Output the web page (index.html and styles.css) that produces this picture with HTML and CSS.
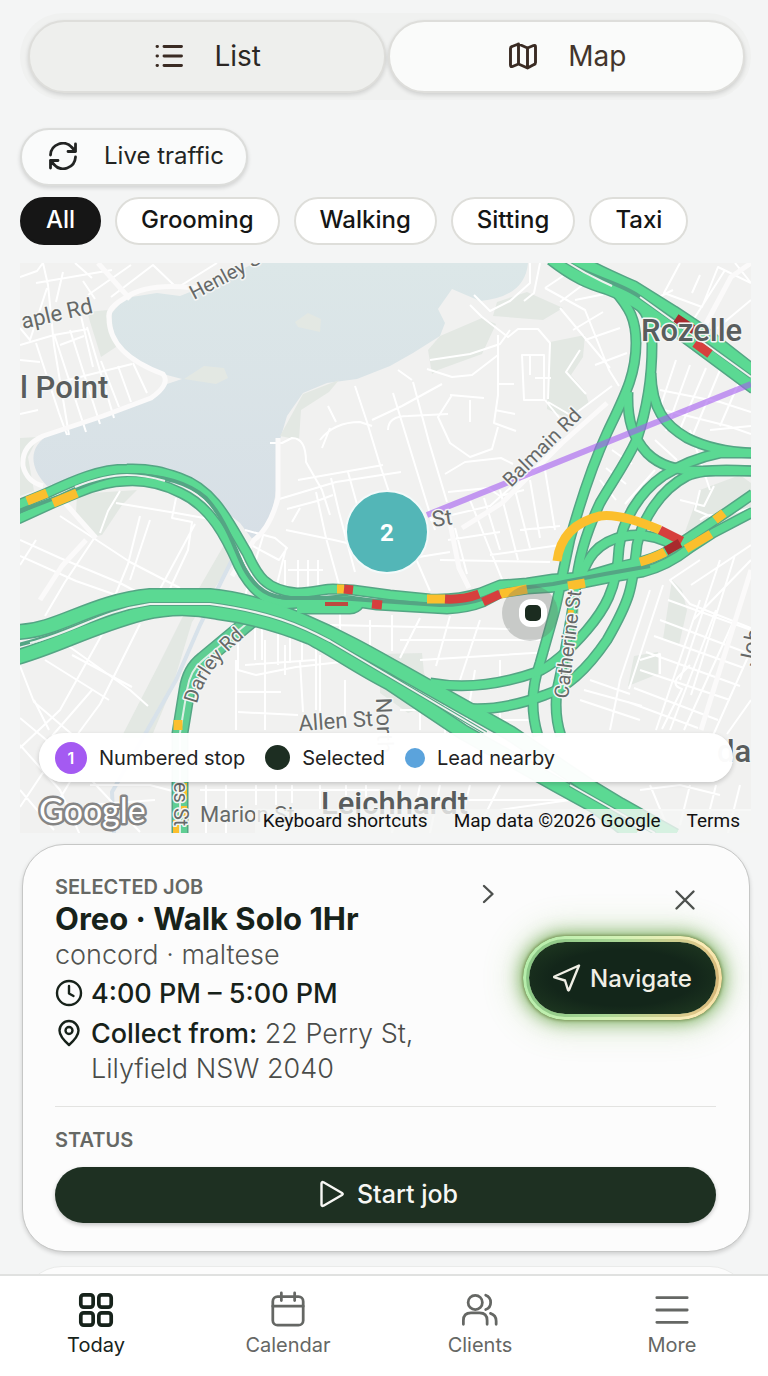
FILE: index.html
```html
<!DOCTYPE html>
<html lang="en">
<head>
<meta charset="utf-8">
<meta name="viewport" content="width=device-width, initial-scale=1">
<title>Today</title>
<link rel="stylesheet" href="styles.css">
</head>
<body>
<div class="app">
  <main class="main">
    <div class="segmented">
      <button class="segment" type="button">
        <svg class="icon" viewBox="0 0 28 28"><path d="M9 4.500h17.500M9 14h17.500M9 23.500h17.500" /><path d="M2 4.500h.5M2 14h.5M2 23.500h.5"/></svg>
        List
      </button>
      <button class="segment segment-active" type="button" aria-pressed="true">
        <svg class="icon" viewBox="0 0 28 28"><path d="M1.500 6.500Q1.500 5 3 4.500L9.500 2l9 4 6-2.500q2-.7 2 1.500v15.500q0 1.500-1.500 2L18.500 26l-9-4-6 2.500q-2 .7-2-1.500zM9.500 2v20M18.500 6v20"/></svg>
        Map
      </button>
    </div>

    <button class="traffic" type="button">
      <svg class="icon" viewBox="0 0 28 28"><path d="M1.500 13A12.300 12.300 0 0 1 23 5.500l3.500 4M26.500 2v7.500H19M26.500 15A12.300 12.300 0 0 1 5 22.500l-3.500-4M1.500 26v-7.500H9"/></svg>
      Live traffic
    </button>

    <div class="chips">
      <button class="chip chip-active" type="button" aria-pressed="true">All</button>
      <button class="chip" type="button">Grooming</button>
      <button class="chip" type="button">Walking</button>
      <button class="chip" type="button">Sitting</button>
      <button class="chip" type="button">Taxi</button>
    </div>

    <section class="map" aria-label="Map">
      <svg class="map-canvas" viewBox="20 263 731 570" preserveAspectRatio="xMidYMid slice">
        <defs>
          <linearGradient id="water" x1="0" y1="0" x2="0" y2="1"><stop offset="0" stop-color="#dce7e8"/><stop offset="1" stop-color="#d7dfe6"/></linearGradient>
          <g id="roads">
            <path d="M552 258C575 276 590 282 607 287C630 295 645 307 663 319L693 341L755 387"/>
            <path d="M572 258C595 272 615 280 633 288L673 313L700 331L755 374"/>
            <path d="M18 632C60 630 90 602 150 596H210C235 598 270 608 300 620C340 637 370 654 400 671L510 733L587 785L620 805L675 836"/>
            <path d="M18 657C60 645 90 627 143 613Q180 604 217 612C250 616 280 625 310 637C335 650 360 668 390 683L463 732L557 785L597 807L634 836"/>
          </g>
          <g id="ramps">
            <path d="M18 505L47 493C75 480 100 469 127 469C150 468 165 473 180 478C215 490 230 525 247 553C257 575 265 590 297 593C315 592 325 589 333 589L353 590L390 595L430 599Q458 600 480 593L500 585L527 583L553 579L583 577L617 567L640 562Q665 555 682 542L700 530L727 512L753 494"/>
            <path d="M18 519L53 503L77 493C91 487 108 481 127 481C145 480 165 485 181 493C211 507 226 537 239 566C249 586 264 602 286 604L343 600L377 605L447 609Q468 608 483 602L500 593L527 589L557 587L583 583L613 577L643 572Q667 566 690 548L713 533L753 512"/>
            <path d="M297 609H350Q356 609 360 603"/>
            <path d="M614 290C630 308 636 320 636 343C636 375 625 395 607 433C590 470 580 503 570 539C560 585 558 600 553 617L540 663Q527 700 538 736"/>
            <path d="M626 291C650 312 652 325 652 345C652 380 645 415 637 439C625 465 610 485 600 503C585 535 578 560 575 593C570 625 565 655 557 690Q554 715 561 736"/>
            <path d="M628 392C627 420 633 438 647 453Q665 471 700 471H753"/>
            <path d="M651 373C652 410 665 425 687 438Q715 452 753 453"/>
            <path d="M753 453H720C700 457 680 465 663 476C640 492 622 520 619 548C617 590 604 610 587 630C570 650 550 667 537 672Q480 692 430 683"/>
            <path d="M753 471C720 469 700 470 687 476C660 490 642 520 637 545C632 590 630 600 607 640C590 665 570 687 545 695Q500 712 463 708"/>
            <path d="M580 579C587 560 595 542 625 536Q650 532 675 546"/>
          </g>
          <path id="darley" d="M256 616L227 640L203 660Q190 670 187 690L180 733V836"/>
          <path id="darley-text" d="M197 704Q204 670 250 632"/>
          <path id="catherine" d="M576 586C575 620 569 660 559 694"/>
        </defs>

        <rect class="land" x="20" y="263" width="731" height="570"/>
        <path fill="url(#water)" d="M255 263L215 282L180 296L157 293L125 298L112 313C111 335 118 350 143 366L163 374L182 379L167 384L157 394L127 408L87 423L50 434C30 445 27 465 47 486L127 473L197 489L240 523L253 540L265 528C275 510 279 480 279 443L287 416L303 393L327 383L357 379L390 366L413 353L440 336L445 323L438 309L452 289L480 301Q525 297 528 263Z"/>
        <g class="park">
          <path d="M87 312l21-2 8 37-15 10zM184 379l20-13 20 2 4 10-12 6zM295 322l13-9 13 6-1 13-22-5z"/>
          <path d="M280 436l23-42 36-14-10 12-28 18-2 30zM428 350l12-14 42-18 14 6-14 30-44 16-6 4zM497 302l30-10 36 16-20 12-50-4zM550 342l35-7-2 22-12 18 14 16 4 13-20 15-22-10z"/>
          <path d="M77 494l60-4-15 15-20 30-10 2-16-24zM20 438l18-1-10 20 6 34-14 5zM700 490l40-15 11 8v28l-40 15-26 6zM672 580l10 10 5 20-8 35-16-6zM634 656l24-4v22l-30 12zM380 654l42-1 2 20 14 30-30 10-28-20z"/>
          <path d="M228 538l14 9-50 75-20 66-21 50h-30l36-70 26-52z"/>
        </g>
        <path class="creek" d="M238 548L222 580 200 625 176 680 152 722 112 792 114 833"/>

        <g class="street">
          <path d="M20 277l17-6 6-8M43 263l5 22 6 60 15 90M36 283l76-13M47 288L30 340 20 328M63 272l-7 30M75 263l17 15M88 295l43-30M111 297l42-32 24 23 40-25M20 345l34-10 34-6M36 343l23 70 8 22M54 334l32 98M70 330l30 94M87 327l27 91M101 361l18 46M118 366l13 36M133 363l14 30M60 382l72-18M20 414l18-4M20 360l20 2M80 312l13 55M83 281l12 18M60 345l24-9"/>
          <path d="M20 540l40 18 60 25 34 18M20 556l56 25 40 14M36 540l-16 25M60 516l70 46 50 26M95 537l-30 45-20 34M116 503l60 10 45 8M120 491l-12 20-8 22M140 516l-12 48-18 44M150 520l-20 60M176 498l-4 20 20 4-4 28-28 60M195 524l-35 65M110 620l-50 90-40 38M140 624l-40 80-34 46M60 640l70 50 18 16M45 660l64 40M20 666l14 36 40 34M34 700l15 30M72 655l60 32M92 690l-40 46M20 718l60 50 60 64M20 745l40 45 20 45M48 765l-28 42M80 765l-24 40M90 785h60l30 8M85 805l70-5M20 790l34 40"/>
          <path d="M245 530l30 8 12 10-8 12-26-14M263 536l-18 60M286 548l-10 40M286 530l48 10 26 6M276 500l60-18 65-10M298 480l85-15M287 509l30-8 16-6M292 522l8-14M316 492l10 46 14 50M331 478l8 34 16 60M348 472l10 36M270 443h12l10-5q14 0 14 24l16 28 8 25M320 440q14-18 40-18l12 4M330 428l-8 20M328 406l8 16M355 386l12 36 14 46 10 30M393 393l22 72 20 65M372 420l30-14 40-22M398 370l14 10M388 430q0-14 20-14l40-2"/>
          <path d="M530 263v20l-20 18-20 10-16-16M540 263l-6 30-10 8M545 288l30-20M545 288l40 22 24 60 10 16M560 302l40-30M560 308l50 60M575 300l30-6M573 330l30-18M585 340l35-12M595 365l32-12M470 305l12 12 26 20 10-8h20l12 14-2 56M430 360l40-6 30-10 10-14M498 335v60l-4 28 22 8M498 355l-26 20-20 2-25-8M452 395l-14 22 12 26 20 14 22-8 6-22M450 395l34 3M470 400v22M498 384h16M495 410l20 4M522 355h22v45h-20zM530 355v20M535 378h16M548 402l24 14 40-30M580 350l-14 22 20 22M413 382l16 60 18 60M445 474l20-12 36-4 12 6M448 492l40-4 12 8 24-6M430 520l60-14 40-36M545 400l16 20M448 540l52-8M470 500l20 50 14 34M484 498l16 52M500 490l18 70M514 486l16 62M530 480l10 58M545 470l10 60M440 560l110 2M455 528l12 46M410 545l20 46M400 560l50-8M520 530l40-4M490 555l70-10"/>
          <path d="M680 263l-16 30 38 14 16-40 33 16M700 275l-8 18M725 270l-42 66M751 300l-60 50M735 263l16 20M673 290l-20 10M676 360l-20 60M690 365l-24 66M706 368l-28 66M720 370l-30 72M660 390l60 12 31 10M664 410l64 16 23 8M690 430l20 60M710 430l41-4M655 470l-30 34M655 440l22 20M740 380l-20 46M680 500l24 6 10-20M600 480l16 20M606 468l20 16M612 450l20 14"/>
          <path d="M650 590l-30 90-10 50M663 585l-34 104M700 560l-30 20 20 24 61 24M720 560l-40 120M735 555l-44 140M751 545l-60 40M751 560l-58 60M668 600l83 30M660 620l90 34M654 636l90 32M646 652l94 34M640 670l90 30M634 688l84 32M628 702l70 26M700 600l-44 130M716 610l-46 120M734 620l-50 110M751 650l-40 90M751 700l-24 34M640 660l20-6v20M690 665l-10 10q-10 10 2 14l-20 40M580 700l60 20M584 690l58 16M590 680l40 14M700 520q12-10 20 0M700 490l-5 20 20 8 36-10"/>
          <path d="M265 640v90M285 645v30M238 630v40l18 5 40-8 90-10M235 692h46M238 712l60 3M236 660v70M300 660l3 52M320 655v60M345 680v40M245 665l70-5M255 600v60M262 600v60M278 610v55M290 615v48M302 620v40M316 640v70M285 560v50M298 560v44M308 560v44M318 560v34M288 570h35M286 590h30M340 612v35M370 620v30M392 615v36M420 618l-20 40M450 616l-14 50M480 620l-20 60M400 640h140M420 660l130-8M330 625l180 4M420 690v40M445 705v30M475 670l-10 60M500 660v20M470 720h60M500 710v24M400 710h40"/>
          <path d="M206 785v48M226 785v48M256 785v20M276 785v20M292 785v18M320 785v24M346 785v20M366 785v20M400 785l-8 48M420 785l-6 30M440 785l-10 48M470 785l-10 40M500 785l-20 40M200 790h180M420 800h150M640 790l40-5 40 10M650 785l20 48M690 785l-10 40M716 785l-10 40M740 785l-12 48M640 810h111M570 800l-70 10"/>
        </g>
        <g class="street street-wide">
          <path d="M98 263l32 36M210 290q-60-10-85 8-18 10-16 20 0 36 54 56 8 10-12 24l-48 18-60 20q-22 10-20 30 4 16 20 20M96 538l-46-52M86 540l-24 26-22 34"/>
          <path d="M278 438v60q-8 30-24 42l-22 36M447 508l12 60 10 20M751 263l-20 14-30 56M751 570l-50 160M462 528l40-25 60-60 45-40"/>
        </g>

        <use href="#darley" class="case-wide"/><use href="#darley" class="fill-wide"/><use href="#darley" class="gap"/>
        <use href="#catherine" class="catherine"/>
        <use href="#ramps" class="case"/><use href="#roads" class="case-main"/>
        <use href="#ramps" class="fill"/><use href="#roads" class="fill-main"/>
        <g class="median">
          <path d="M18 512L60 496C90 482 110 475 127 475C165 475 190 484 206 498C226 520 233 545 244 568C256 590 270 598 290 598H338L380 601L440 605Q465 605 485 598L505 590L553 584L605 574L650 566"/>
          <path d="M565 261C590 278 620 282 640 297L690 332L751 377M18 645C75 632 100 611 150 604H210C270 612 300 625 330 641L486 733M570 785L655 833"/>
        </g>
        <path class="median-light" d="M75 487Q105 475 127 475 145 475 165 481M30 643C75 632 100 611 150 604H210C270 612 300 625 330 641L486 733M570 785L655 833M567 262C590 277 600 280 612 286M640 297L751 377"/>

        <g class="slow">
          <path d="M27 501l20-8M53 503l24-10M337 589h7M427 599h18M500 594l27-5M557 561C560 537 575 522 600 516Q620 513 660 530M640 562Q654 558 665 552M686 549l25-15M715 520l9-7M568 586l17-3M178 720v10"/>
        </g>
        <g class="jam">
          <path d="M344 589l9 1M372 604l10 1M445 599Q463 600 479 594M483 602l17-8M660 530l22 11M695 343l15 11"/>
        </g>
        <g class="stopped"><path d="M666 551l14-8M676 318l18 12"/></g>
        <path class="jam-thin" d="M325 604h23"/>
        <path class="slow-thin" d="M184 783v16M184 806v10M176 820v14M571 610l-2 16"/>

        <path class="route" d="M427 515L751 384"/>

        <g class="road-label">
          <text transform="translate(23 329) rotate(-13)">aple Rd</text>
          <text transform="translate(433 527) rotate(-8)">St</text>
          <text transform="translate(299 731) rotate(-4)">Allen St</text>
          <text transform="translate(376 698) rotate(88)">North</text>
          <text x="200" y="822">Marion St</text>
          <text transform="translate(754 667) rotate(-78)">Joh</text>
        </g>
        <g class="road-label road-label-small">
          <text transform="translate(194 300) rotate(-28)">Henley</text>
          <text transform="translate(252 268) rotate(-28)">St</text>
          <text transform="translate(511 488) rotate(-45)">Balmain Rd</text>
          <text><textPath href="#darley-text">Darley Rd</textPath></text>
          <text transform="translate(568 699) rotate(-83)">Catherine St</text>
          <text transform="translate(174 782) rotate(90)">es St</text>
        </g>
        <g class="place-label">
          <text x="641" y="341">Rozelle</text>
          <text x="20" y="398">l Point</text>
          <text x="321" y="814">Leichhardt</text>
          <text x="717" y="762">da</text>
        </g>

        <circle class="halo" cx="530" cy="613" r="28"/>
        <rect class="pin-ring" x="519" y="599" width="28" height="28" rx="12"/>
        <rect class="pin-dot" x="525" y="605" width="16" height="16" rx="5"/>
        <circle class="cluster" cx="387" cy="532" r="41"/>
        <text class="cluster-text" x="387" y="541">2</text>
        <text class="map-logo" x="39" y="823">Google</text>
      </svg>

      <div class="legend">
        <span class="legend-item"><span class="dot dot-stop">1</span>Numbered stop</span>
        <span class="legend-item"><span class="dot dot-selected"></span>Selected</span>
        <span class="legend-item"><span class="dot dot-lead"></span>Lead nearby</span>
      </div>
      <div class="credits">
        <button class="credit" type="button">Keyboard shortcuts</button>
        <span>Map data ©2026 Google</span>
        <a class="credit" href="#terms">Terms</a>
      </div>
    </section>

    <article class="card">
      <div class="card-top">
        <div class="job">
          <p class="eyebrow">SELECTED JOB</p>
          <h2 class="job-title">Oreo · Walk Solo 1Hr</h2>
          <p class="job-sub">concord · maltese</p>
          <p class="job-row">
            <svg class="icon" viewBox="0 0 28 28"><circle cx="14" cy="14" r="12"/><path d="M14 7v7.500l4.500 2.500"/></svg>
            <strong>4:00 PM – 5:00 PM</strong>
          </p>
          <p class="job-row">
            <svg class="icon" viewBox="0 0 28 28"><path d="M14 26Q4.500 17.500 4.500 11.500a9.500 9.500 0 0 1 19 0Q23.500 17.500 14 26z"/><circle cx="14" cy="11.500" r="3.500"/></svg>
            <span><strong>Collect from:</strong> 22 Perry St, Lilyfield NSW 2040</span>
          </p>
        </div>
        <button class="open" type="button" aria-label="Open job"><svg class="icon" viewBox="0 0 28 28"><path d="M10 6l8.500 8-8.500 8"/></svg></button>
        <div class="actions">
          <button class="close" type="button" aria-label="Close"><svg class="icon" viewBox="0 0 28 28"><path d="M5.500 5.500l17 17M22.500 5.500l-17 17"/></svg></button>
          <button class="navigate" type="button">
            <svg class="icon" viewBox="0 0 28 28"><path d="M26 1.500L1.500 12.500q-.8.500 0 .9L12 16.500l3 9.500q.5 1 1 0z"/></svg>
            Navigate
          </button>
        </div>
      </div>
      <div class="status">
        <p class="eyebrow">STATUS</p>
        <button class="start" type="button">
          <svg class="icon" viewBox="0 0 28 28"><path d="M4.500 3.500q0-2 2-1.200L25 13q1.500 1 0 2L6.500 25.700q-2 .8-2-1.200z"/></svg>
          Start job
        </button>
      </div>
    </article>
    <article class="card card-next"></article>
  </main>

  <nav class="tabs">
    <a class="tab tab-active" href="#today" aria-current="page">
      <svg class="tab-icon" viewBox="0 0 40 40"><rect x="4" y="4" width="13" height="13" rx="3"/><rect x="23" y="4" width="13" height="13" rx="3"/><rect x="4" y="23" width="13" height="13" rx="3"/><rect x="23" y="23" width="13" height="13" rx="3"/></svg>
      Today
    </a>
    <a class="tab" href="#calendar">
      <svg class="tab-icon" viewBox="0 0 40 40"><rect x="4" y="6" width="32" height="30" rx="5"/><path d="M4 16h32M13 2v8M27 2v8"/></svg>
      Calendar
    </a>
    <a class="tab" href="#clients">
      <svg class="tab-icon" viewBox="0 0 40 40"><circle cx="15" cy="12" r="7.500"/><path d="M2.500 35v-4q0-8 8-8h9q8 0 8 8v4M26 4.500a8 8 0 0 1 0 15M31 23.500q6 2 6 8V35"/></svg>
      Clients
    </a>
    <a class="tab" href="#more">
      <svg class="tab-icon" viewBox="0 0 40 40"><path d="M4 7h32M4 20h32M4 33h32"/></svg>
      More
    </a>
  </nav>
</div>
</body>
</html>
```

FILE: styles.css
```css
* { box-sizing: border-box; }
body {
  margin: 0;
  background: #f4f5f5;
  color: #17211a;
  font-family: Inter, "Liberation Sans", sans-serif;
}
p, h2 { margin: 0; }
button {
  margin: 0;
  padding: 0;
  border: 0;
  background: none;
  color: inherit;
  font: inherit;
  cursor: pointer;
}
a { color: inherit; text-decoration: none; }

.app { display: flex; flex-direction: column; height: 100vh; }
.main {
  flex: 1;
  min-height: 0;
  overflow-y: auto;
  scrollbar-width: none;
  padding: 13px 17px 0 20px;
}
.icon {
  flex: none;
  width: 28px;
  height: 28px;
  fill: none;
  stroke: currentColor;
  stroke-width: 2.4;
  stroke-linecap: round;
  stroke-linejoin: round;
}

.segmented {
  display: grid;
  grid-template-columns: 1fr 1fr;
  gap: 2px;
  padding: 7px 6px 7px 8px;
  border-radius: 44px;
  background: #f0f1f0;
}
.segment {
  display: flex;
  align-items: center;
  justify-content: center;
  gap: 31px;
  height: 73px;
  padding: 0 0 2px 3px;
  border: 2px solid #dededb;
  border-radius: 37px;
  background: #eeefed;
  color: #2b2724;
  font-size: 28px;
  box-shadow: 0 2px 4px rgba(0, 0, 0, .14);
}
.segment-active { background: #fafbfa; color: #43352c; }
.segment .icon { color: #3a2b23; stroke-width: 2.9; }

.traffic {
  display: flex;
  align-items: center;
  gap: 27px;
  height: 58px;
  margin-top: 28px;
  padding: 0 22px 3px 27px;
  border: 2px solid #dcdddb;
  border-radius: 29px;
  background: #fafbfb;
  color: #222423;
  font-size: 24px;
  box-shadow: 0 2px 4px rgba(0, 0, 0, .14);
}
.traffic .icon { stroke-width: 2.8; }

.chips { display: flex; gap: 14px; margin-top: 11px; }
.chip {
  height: 48px;
  padding: 0 24px 3px;
  border: 2px solid #dededa;
  border-radius: 24px;
  background: #fff;
  color: #151615;
  font-size: 24px;
  font-weight: 500;
}
.chip-active { border-color: #161616; background: #161616; color: #fff; }

.map {
  position: relative;
  height: 570px;
  margin-top: 18px;
  overflow: hidden;
  font-family: Roboto, "Liberation Sans", sans-serif;
}
.map-canvas { display: block; width: 100%; height: 100%; }
.land { fill: #f1f1f0; }
.park { fill: #e3e8e3; }
.creek { fill: none; stroke: #d8e2ea; stroke-width: 4; }
.street { fill: none; stroke: #fff; stroke-width: 2; stroke-linejoin: round; }
.street-wide { stroke: #fbfafa; stroke-width: 5; }
.case, .case-main, .case-wide, .fill, .fill-main, .fill-wide, .gap, .median, .median-light { fill: none; stroke-linejoin: round; }
.case { stroke: #54a584; stroke-width: 11; }
.case-main { stroke: #54a584; stroke-width: 16; }
.case-wide { stroke: #54a584; stroke-width: 17; }
.fill { stroke: #5bd993; stroke-width: 8; }
.fill-main { stroke: #5bd993; stroke-width: 13; }
.fill-wide { stroke: #5fce93; stroke-width: 14; }
.gap { stroke: #dcefe4; stroke-width: 2; }
.catherine { fill: none; stroke: #a5dfbf; stroke-width: 8; }
.median { stroke: #54a584; stroke-width: 4; }
.median-light { stroke: #edf2ee; stroke-width: 2; }
.slow, .jam, .stopped { fill: none; stroke-width: 9; }
.slow, .slow-thin { stroke: #fbbf2d; }
.jam { stroke: #d63f3d; }
.stopped { stroke: #a82a2d; }
.jam-thin { stroke: #bd4a3f; stroke-width: 4; }
.slow-thin { fill: none; stroke-width: 6; }
.route { stroke: #a45cf0; stroke-width: 6; opacity: .6; }
.road-label, .place-label {
  fill: #666968;
  stroke: #f4f5f4;
  stroke-width: 3;
  stroke-linejoin: round;
  paint-order: stroke;
}
.road-label { font-size: 22px; }
.road-label-small { font-size: 20px; }
.place-label { font-size: 31px; font-weight: 500; fill: #595d5d; }
.halo { fill: #6b706c; opacity: .3; }
.pin-ring { fill: #fff; }
.pin-dot { fill: #1b2c20; }
.cluster { fill: #53b6b7; stroke: #f3fafa; stroke-width: 2; }
.cluster-text { fill: #fff; font-size: 24px; font-weight: 700; text-anchor: middle; }
.map-logo {
  fill: #fff;
  stroke: #858585;
  stroke-width: 5;
  stroke-linejoin: round;
  paint-order: stroke;
  font-family: Lato, sans-serif;
  font-size: 34px;
}

.legend {
  position: absolute;
  right: 18px;
  bottom: 51px;
  left: 19px;
  display: flex;
  align-items: center;
  gap: 20px;
  height: 49px;
  padding: 0 16px;
  border-radius: 25px;
  background: rgba(255, 255, 255, .97);
  box-shadow: 0 2px 5px rgba(0, 0, 0, .18);
  color: #222;
  font-family: Inter, sans-serif;
  font-size: 20px;
}
.legend-item { display: flex; align-items: center; gap: 12px; }
.dot { border-radius: 50%; }
.dot-stop {
  width: 32px;
  height: 32px;
  background: #a45af2;
  color: #fff;
  font-size: 16px;
  font-weight: 600;
  line-height: 32px;
  text-align: center;
}
.dot-selected { width: 25px; height: 25px; background: #1d2e22; }
.dot-lead { width: 20px; height: 20px; background: #5ba3dc; }
.credits {
  position: absolute;
  right: 0;
  bottom: 0;
  display: flex;
  gap: 26px;
  padding: 0 11px 0 8px;
  background: rgba(245, 246, 245, .8);
  color: #111;
  font-size: 19px;
  line-height: 24px;
}

.card {
  margin: 11px 1px 0 2px;
  padding: 30px 33px 28px 32px;
  border: 1px solid #c6c7c6;
  border-radius: 42px;
  background: #fcfcfc;
  box-shadow: 0 2px 4px rgba(0, 0, 0, .16);
}
.card-next { height: 80px; margin-top: 14px; border-color: #eaebea; box-shadow: none; }
.card-top {
  display: flex;
  align-items: flex-start;
  padding-bottom: 20px;
  border-bottom: 1px solid #e3e3e1;
}
.job { flex: 1; }
.eyebrow { color: #666864; font-size: 20px; font-weight: 600; line-height: 24px; }
.job-title { color: #17221a; font-size: 31px; font-weight: 700; line-height: 40px; }
.job-sub { color: #515350; font-size: 27px; font-weight: 300; line-height: 32px; }
.job-row {
  display: flex;
  gap: 8px;
  margin-top: 5px;
  color: #4a4c4a;
  font-size: 27px;
  font-weight: 300;
  line-height: 35px;
}
.job-row .icon { margin-top: 3px; color: #17221a; }
.job-row strong { color: #17221a; font-weight: 500; }
.open { height: 28px; margin-top: 5px; padding: 0 27px 0 47px; color: #4d504e; }
.actions { display: flex; flex-direction: column; align-items: flex-end; }
.close { width: 28px; height: 28px; margin: 11px 17px 28px 0; color: #4d504e; }
.navigate {
  position: relative;
  display: flex;
  align-items: center;
  justify-content: center;
  gap: 9px;
  width: 187px;
  height: 72px;
  border-radius: 36px;
  background: radial-gradient(#13261a 55%, #213c22);
  color: #f0efe6;
  font-size: 24px;
  font-weight: 500;
  box-shadow: 0 0 3px 7px #7f9a5e, 0 0 16px 9px rgba(98, 160, 66, .7), 0 0 32px 14px rgba(132, 185, 96, .3);
}
.navigate::before, .navigate::after {
  content: "";
  position: absolute;
  border: 6px solid transparent;
  border-radius: 42px;
  inset: -6px;
  background: linear-gradient(100deg, #87c584, #a9d795 45%, #dfc98b 85%, #cfae70) border-box;
  mask: linear-gradient(#000 0 0) padding-box exclude, linear-gradient(#000 0 0) border-box;
}
.navigate::after {
  border-width: 3px;
  background: linear-gradient(100deg, #b4edab, #d2f2b5 45%, #fbecb8 85%, #f3dda0) border-box;
}
.status { padding-top: 21px; }
.start {
  display: flex;
  align-items: center;
  justify-content: center;
  gap: 12px;
  width: 100%;
  height: 56px;
  margin-top: 15px;
  padding: 0 0 2px 4px;
  border-radius: 28px;
  background: #1e3022;
  color: #f7f7f4;
  font-size: 25px;
  font-weight: 500;
  box-shadow: 0 2px 4px rgba(0, 0, 0, .22);
}

.tabs {
  display: grid;
  grid-template-columns: repeat(4, 1fr);
  height: 102px;
  border-top: 2px solid #e0e1e0;
  background: #fff;
}
.tab {
  display: flex;
  flex-direction: column;
  align-items: center;
  gap: 4px;
  padding-top: 15px;
  color: #656764;
  font-size: 20px;
  line-height: 24px;
}
.tab-active { color: #17231b; }
.tab-icon {
  width: 38px;
  height: 38px;
  fill: none;
  stroke: currentColor;
  stroke-width: 2.9;
  stroke-linecap: round;
  stroke-linejoin: round;
}
.tab-active .tab-icon { stroke-width: 3.9; }
```
